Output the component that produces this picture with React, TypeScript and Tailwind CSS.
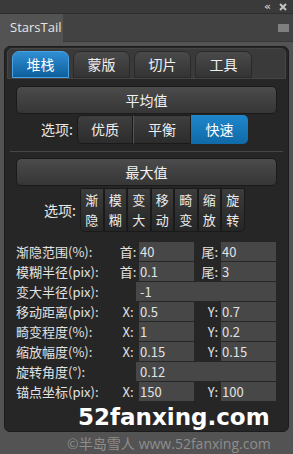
import React from "react";

const cjk = { fontFamily: '"Noto Sans CJK SC", "Noto Sans", sans-serif' };

function Field({ label, a, av, b, bv }: { label: string; a?: string; av: string; b?: string; bv?: string }) {
  return (
    <div className="flex h-[19px] items-center text-[13px] leading-none text-[#e2e2e2]">
      <div className="w-[101px] whitespace-nowrap">{label}</div>
      {a !== undefined ? (
        <>
          <div className="w-[22px] text-center">{a}</div>
          <div className="w-[55px] h-full bg-[#474747] flex items-center pl-[1px]">{av}</div>
          <div className="w-[27px] text-right pr-[3px]">{b}</div>
          <div className="w-[55px] h-full bg-[#474747] flex items-center pl-[1px]">{bv}</div>
        </>
      ) : (
        <>
          <div className="w-[19px]" />
          <div className="w-[140px] h-full bg-[#474747] flex items-center pl-[4px]">{av}</div>
        </>
      )}
    </div>
  );
}

export default function App() {
  const tabs = ["堆栈", "蒙版", "切片", "工具"];
  const vbtns = ["渐隐", "模糊", "变大", "移动", "畸变", "缩放", "旋转"];
  return (
    <div className="w-[293px] h-[454px] bg-[#535353] flex flex-col overflow-hidden" style={cjk}>
      {/* top strip */}
      <div className="h-[14px] bg-[#3a3a3a] border-b border-[#2e2e2e] flex items-center justify-end pr-[6px] gap-[10px]">
        <span className="text-[11px] leading-none text-[#c4c4c4] font-bold tracking-[-2px]" style={{ fontFamily: '"DejaVu Sans", sans-serif' }}>‹‹</span>
        <svg width="8" height="8" viewBox="0 0 8 8">
          <path d="M1 1 L7 7 M7 1 L1 7" stroke="#c4c4c4" strokeWidth="2" />
        </svg>
      </div>
      {/* title tab bar */}
      <div className="h-[28px] bg-[#424242] flex items-stretch">
        <div className="w-[63px] bg-[#535353] flex items-center pl-[10px] text-[13px] text-[#e6e6e6]" style={{ fontFamily: '"Open Sans", "Noto Sans", sans-serif' }}>
          StarsTail
        </div>
        <div className="flex-1 border-b border-[#383838]" />
        <div className="w-[20px] flex items-center justify-center border-b border-[#383838]">
          <svg width="11" height="8" viewBox="0 0 11 8">
            <path d="M0 1 H11 M0 3 H11 M0 5 H11 M0 7 H11" stroke="#bdbdbd" strokeWidth="1" />
          </svg>
        </div>
      </div>
      {/* body */}
      <div className="px-[4px] pt-[4px]">
        <div className="h-[386px] rounded-[6px] bg-[#262626] border border-[#1c1c1c] flex flex-col relative overflow-hidden">
          {/* tabs row */}
          <div className="mx-[2px] mt-[1px] h-[31px] rounded-t-[5px] bg-[#3a3a3a] border border-[#454545] flex items-end pl-[4px] gap-[4px]">
            {tabs.map((t, i) => (
              <div
                key={t}
                className={
                  "w-[57px] h-[27px] rounded-t-[7px] flex items-center justify-center text-[14px] " +
                  (i === 0
                    ? "bg-gradient-to-b from-[#2f8fd4] to-[#0e5f9c] text-white border border-[#4aa3e0]"
                    : "bg-gradient-to-b from-[#4a4a4a] to-[#343434] text-[#f0f0f0] border border-[#2a2a2a]")
                }
              >
                {t}
              </div>
            ))}
          </div>
          {/* content */}
          <div className="flex-1 px-[11px] pt-[7px] flex flex-col">
            <div className="h-[28px] rounded-[5px] bg-gradient-to-b from-[#4b4b4b] to-[#363636] border border-[#1a1a1a] flex items-center justify-center text-[14px] text-[#f2f2f2]">
              平均值
            </div>
            <div className="flex items-center mt-[1px] h-[29px]">
              <div className="w-[61px] text-right pr-[4px] text-[14px] text-[#e6e6e6]">选项:</div>
              <div className="flex h-full">
                <div className="w-[56px] h-full rounded-l-[5px] bg-gradient-to-b from-[#3f3f3f] to-[#2c2c2c] border border-[#1a1a1a] flex items-center justify-center text-[14px] text-[#f0f0f0]">优质</div>
                <div className="w-[58px] h-full bg-gradient-to-b from-[#3f3f3f] to-[#2c2c2c] border-y border-r border-[#1a1a1a] border-l border-l-[#555] flex items-center justify-center text-[14px] text-[#f0f0f0]">平衡</div>
                <div className="w-[57px] h-full rounded-r-[5px] bg-gradient-to-b from-[#1f86cc] to-[#0f6aa8] flex items-center justify-center text-[14px] text-white">快速</div>
              </div>
            </div>
            <div className="mt-[7px] -mx-[6px] h-px bg-[#474747]" />
            <div className="mt-[6px] h-[28px] rounded-[5px] bg-gradient-to-b from-[#4b4b4b] to-[#363636] border border-[#1a1a1a] flex items-center justify-center text-[14px] text-[#f2f2f2]">
              最大值
            </div>
            <div className="flex items-center mt-[2px] h-[44px]">
              <div className="w-[64px] text-right pr-[4px] text-[14px] text-[#e6e6e6]">选项:</div>
              <div className="flex h-full">
                {vbtns.map((v, i) => (
                  <div
                    key={v}
                    className={
                      "w-[23.5px] h-full bg-gradient-to-b from-[#3d3d3d] to-[#262626] border border-[#1a1a1a] flex flex-col items-center justify-center text-[13px] leading-[20px] text-[#ededed] " +
                      (i === 0 ? "rounded-bl-[5px] rounded-tl-[2px]" : "") +
                      (i === 6 ? " rounded-br-[5px] rounded-tr-[2px]" : "")
                    }
                  >
                    <span className="block">{v[0]}</span>
                    <span className="block">{v[1]}</span>
                  </div>
                ))}
              </div>
            </div>
            <div className="mt-[10px] flex flex-col gap-[1px]">
              <Field label="渐隐范围(%):" a="首:" av="40" b="尾:" bv="40" />
              <Field label="模糊半径(pix):" a="首:" av="0.1" b="尾:" bv="3" />
              <Field label="变大半径(pix):" av="-1" />
              <Field label="移动距离(pix):" a="X:" av="0.5" b="Y:" bv="0.7" />
              <Field label="畸变程度(%):" a="X:" av="1" b="Y:" bv="0.2" />
              <Field label="缩放幅度(%):" a="X:" av="0.15" b="Y:" bv="0.15" />
              <Field label="旋转角度(°):" av="0.12" />
              <Field label="锚点坐标(pix):" a="X:" av="150" b="Y:" bv="100" />
            </div>
            <div
              className="mt-[5px] pl-[62px] text-[23px] leading-none font-bold text-white whitespace-nowrap"
              style={{ fontFamily: '"DejaVu Sans", sans-serif' }}
            >
              52fanxing.com
            </div>
          </div>
        </div>
      </div>
      <div className="flex-1 flex items-center justify-start pl-[67px] text-[14px] text-[#8e8e8e] whitespace-nowrap">
        ©半岛雪人 <span className="ml-[4px]" style={{ fontFamily: '"Open Sans", sans-serif' }}>www.52fanxing.com</span>
      </div>
    </div>
  );
}
